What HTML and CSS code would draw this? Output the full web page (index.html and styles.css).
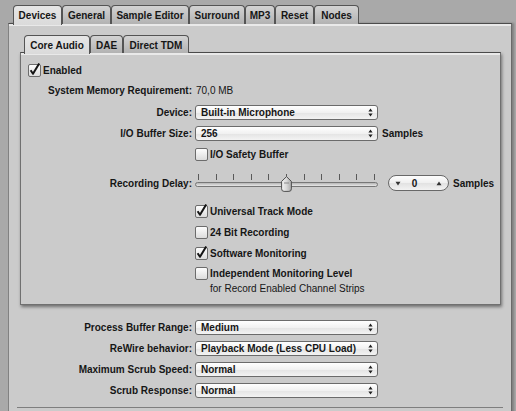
FILE: index.html
```html
<!DOCTYPE html>
<html lang="en">
<head>
    <meta charset="UTF-8">
    <title>Audio Preferences</title>
    <link rel="stylesheet" href="styles.css">
</head>
<body>
    <div class="window">
        <div class="tabs">
            <div class="tab active">Devices</div>
            <div class="tab">General</div>
            <div class="tab">Sample Editor</div>
            <div class="tab">Surround</div>
            <div class="tab">MP3</div>
            <div class="tab">Reset</div>
            <div class="tab">Nodes</div>
        </div>
        <div class="panel">
            <div class="subtabs">
                <div class="subtab active">Core Audio</div>
                <div class="subtab">DAE</div>
                <div class="subtab">Direct TDM</div>
            </div>
            <div class="group">
                <div class="opt enabled">
                    <span class="box"><svg width="13" height="13" viewBox="0 0 13 13"><path d="M2.6 6.2 L5 9.8 L11.2 -0.6" /></svg></span>Enabled
                </div>
                <div class="row mem">
                    <span class="label">System Memory Requirement:</span>
                    <span class="value">70,0 MB</span>
                </div>
                <div class="row">
                    <span class="label">Device:</span>
                    <div class="popup">Built-in Microphone<svg width="5" height="9" viewBox="0 0 5 9"><path d="M0.4 3.6 L2.5 0.6 L4.6 3.6 Z M0.4 5.4 L4.6 5.4 L2.5 8.4 Z" /></svg></div>
                </div>
                <div class="row">
                    <span class="label">I/O Buffer Size:</span>
                    <div class="popup">256<svg width="5" height="9" viewBox="0 0 5 9"><path d="M0.4 3.6 L2.5 0.6 L4.6 3.6 Z M0.4 5.4 L4.6 5.4 L2.5 8.4 Z" /></svg></div>
                    <span class="unit">Samples</span>
                </div>
                <div class="opt">
                    <span class="box"></span>I/O Safety Buffer
                </div>
                <div class="row slider-row">
                    <span class="label">Recording Delay:</span>
                    <div class="slider">
                        <div class="ticks">
                            <i></i><i></i><i></i><i></i><i></i><i></i><i></i><i></i><i></i><i></i><i></i>
                        </div>
                        <div class="track"></div>
                        <svg class="thumb" width="11" height="16" viewBox="0 0 11 16">
                            <defs>
                                <linearGradient id="knob" x1="0" y1="0" x2="1" y2="0">
                                    <stop offset="0" stop-color="#f4f4f4" />
                                    <stop offset="0.5" stop-color="#d8d8d8" />
                                    <stop offset="1" stop-color="#a9a9a9" />
                                </linearGradient>
                            </defs>
                            <path d="M5.5 0.6 L10.4 5.4 V12.8 Q10.4 15.4 7.9 15.4 H3.1 Q0.6 15.4 0.6 12.8 V5.4 Z" fill="url(#knob)" stroke="#505050" stroke-width="1" />
                            <path d="M3 7 H8" stroke="#8a8a8a" stroke-width="1" />
                        </svg>
                    </div>
                    <div class="stepper">
                        <svg width="6" height="5" viewBox="0 0 6 5"><path d="M0.5 0.8 H5.5 L3 4.4 Z" /></svg>
                        <span class="num">0</span>
                        <svg width="6" height="5" viewBox="0 0 6 5"><path d="M0.5 4.2 H5.5 L3 0.6 Z" /></svg>
                    </div>
                    <span class="unit">Samples</span>
                </div>
                <div class="opt">
                    <span class="box"><svg width="13" height="13" viewBox="0 0 13 13"><path d="M2.6 6.2 L5 9.8 L11.2 -0.6" /></svg></span>Universal Track Mode
                </div>
                <div class="opt">
                    <span class="box"></span>24 Bit Recording
                </div>
                <div class="opt">
                    <span class="box"><svg width="13" height="13" viewBox="0 0 13 13"><path d="M2.6 6.2 L5 9.8 L11.2 -0.6" /></svg></span>Software Monitoring
                </div>
                <div class="opt short">
                    <span class="box"></span>Independent Monitoring Level
                </div>
                <div class="note">for Record Enabled Channel Strips</div>
            </div>

            <div class="settings">
                <div class="row">
                    <span class="label">Process Buffer Range:</span>
                    <div class="popup">Medium<svg width="5" height="9" viewBox="0 0 5 9"><path d="M0.4 3.6 L2.5 0.6 L4.6 3.6 Z M0.4 5.4 L4.6 5.4 L2.5 8.4 Z" /></svg></div>
                </div>
                <div class="row">
                    <span class="label">ReWire behavior:</span>
                    <div class="popup">Playback Mode (Less CPU Load)<svg width="5" height="9" viewBox="0 0 5 9"><path d="M0.4 3.6 L2.5 0.6 L4.6 3.6 Z M0.4 5.4 L4.6 5.4 L2.5 8.4 Z" /></svg></div>
                </div>
                <div class="row">
                    <span class="label">Maximum Scrub Speed:</span>
                    <div class="popup">Normal<svg width="5" height="9" viewBox="0 0 5 9"><path d="M0.4 3.6 L2.5 0.6 L4.6 3.6 Z M0.4 5.4 L4.6 5.4 L2.5 8.4 Z" /></svg></div>
                </div>
                <div class="row">
                    <span class="label">Scrub Response:</span>
                    <div class="popup">Normal<svg width="5" height="9" viewBox="0 0 5 9"><path d="M0.4 3.6 L2.5 0.6 L4.6 3.6 Z M0.4 5.4 L4.6 5.4 L2.5 8.4 Z" /></svg></div>
                </div>
            </div>
            <div class="rule"></div>
        </div>
    </div>
</body>
</html>
```

FILE: styles.css
```css
body {
    margin: 0;
    width: 516px;
    height: 411px;
    overflow: hidden;
    background-color: #a9a9a9;
    font-family: "Liberation Sans", Arial, sans-serif;
    font-size: 10px;
    font-weight: bold;
    color: #161616;
}

.window {
    padding: 5px 0 0 8px;
}

/* main tab strip */
.tabs {
    display: flex;
    height: 18px;
    margin-left: 5px;
    position: relative;
    z-index: 1;
}

.tab {
    box-sizing: border-box;
    height: 19px;
    border: 1px solid #545454;
    border-bottom: none;
    border-radius: 4px 4px 0 0;
    background: linear-gradient(#d3d3d3, #b2b2b2);
    display: flex;
    align-items: center;
    justify-content: center;
    padding-top: 1px;
}

.tab.active {
    height: 20px;
    padding-bottom: 1px;
    background: linear-gradient(#e6e6e6, #dadada);
}

.tab:nth-child(1) { width: 49px; }
.tab:nth-child(2) { width: 49px; }
.tab:nth-child(3) { width: 78px; }
.tab:nth-child(4) { width: 56px; }
.tab:nth-child(5) { width: 30px; }
.tab:nth-child(6) { width: 39px; }
.tab:nth-child(7) { width: 45px; }

.panel {
    box-sizing: border-box;
    width: 504px;
    height: 400px;
    padding: 11px 0 0 11px;
    background-color: #cbcbcb;
    border: 1px solid #818181;
    border-top-color: #4c4c4c;
    border-right-color: #6a6a6a;
    box-shadow: inset 0 2px 0 #e9e9e9, 2px 0 2px rgba(0, 0, 0, 0.25);
}

/* inner tab strip */
.subtabs {
    display: flex;
    height: 17px;
    margin-left: 4px;
    position: relative;
    z-index: 1;
}

.subtab {
    box-sizing: border-box;
    height: 18px;
    border: 1px solid #545454;
    border-bottom: none;
    border-radius: 4px 4px 0 0;
    background: linear-gradient(#d3d3d3, #b2b2b2);
    display: flex;
    align-items: center;
    justify-content: center;
    padding-top: 1px;
}

.subtab.active {
    height: 19px;
    padding-bottom: 1px;
    background: linear-gradient(#e6e6e6, #dadada);
}

.subtab:nth-child(1) { width: 66px; }
.subtab:nth-child(2) { width: 33px; }
.subtab:nth-child(3) { width: 66px; }

.group {
    box-sizing: border-box;
    width: 481px;
    height: 253px;
    padding-top: 9px;
    background-color: #cbcbcb;
    border: 1px solid #707070;
    border-top-color: #4a4a4a;
    box-shadow: inset 0 2px 0 #e9e9e9, 1px 2px 3px rgba(0, 0, 0, 0.45);
}

/* label + control rows */
.row {
    display: grid;
    grid-template-columns: 171px 183px auto auto;
    column-gap: 3px;
    align-items: center;
    justify-content: start;
    height: 21px;
}

.row.mem {
    height: 23px;
}

.label {
    text-align: right;
}

.value {
    font-weight: normal;
    padding-left: 1px;
}

.unit {
    margin-left: 1px;
}

.popup {
    box-sizing: border-box;
    width: 183px;
    height: 15px;
    padding: 0 4px 0 5px;
    border: 1px solid #6b6b6b;
    border-radius: 3px;
    background: linear-gradient(#ffffff, #f1f1f1 50%, #e4e4e4 52%, #f3f3f3);
    display: flex;
    align-items: center;
    justify-content: space-between;
}

.popup svg {
    fill: #202020;
}

/* checkbox rows */
.opt {
    display: flex;
    align-items: center;
    gap: 2px;
    height: 21px;
    margin-left: 174px;
}

.opt.enabled {
    height: 17px;
    margin-left: 7px;
}

.opt.short {
    height: 19px;
}

.box {
    box-sizing: border-box;
    width: 13px;
    height: 13px;
    flex: none;
    border: 1px solid #6c6c6c;
    border-radius: 2px;
    background: linear-gradient(#fdfdfd, #dcdcdc);
}

.box svg {
    display: block;
    margin: -1px 0 0 -1px;
    overflow: visible;
}

.box path {
    fill: none;
    stroke: #141414;
    stroke-width: 2;
    stroke-linejoin: round;
}

.note {
    margin-left: 189px;
    font-weight: normal;
    line-height: 11px;
}

/* recording delay slider */
.row.slider-row {
    height: 36px;
    grid-template-columns: 171px 183px auto auto;
}

.slider {
    position: relative;
    height: 20px;
}

.ticks {
    display: flex;
    justify-content: space-between;
    padding: 1px 3px 0;
}

.ticks i {
    width: 1px;
    height: 6px;
    background-color: #595959;
}

.track {
    box-sizing: border-box;
    height: 5px;
    margin-top: 2px;
    border: 1px solid #777;
    border-radius: 3px;
    background: linear-gradient(#b4b4b4, #e8e8e8);
}

.thumb {
    position: absolute;
    left: 86px;
    top: 3px;
}

.stepper {
    box-sizing: border-box;
    width: 61px;
    height: 16px;
    margin-left: 7px;
    padding: 0 6px;
    border: 1px solid #686868;
    border-radius: 8px;
    background: linear-gradient(#fdfdfd, #efefef 50%, #e2e2e2 52%, #f2f2f2);
    display: flex;
    align-items: center;
}

.stepper svg {
    fill: #333;
}

.stepper .num {
    flex: 1;
    text-align: center;
    padding-right: 8px;
}

/* settings below the group box */
.settings {
    margin-top: 12px;
    padding-left: 1px;
}

.rule {
    width: 486px;
    height: 1px;
    margin: 6px 0 0 -3px;
    background-color: #7e7e7e;
}
```
